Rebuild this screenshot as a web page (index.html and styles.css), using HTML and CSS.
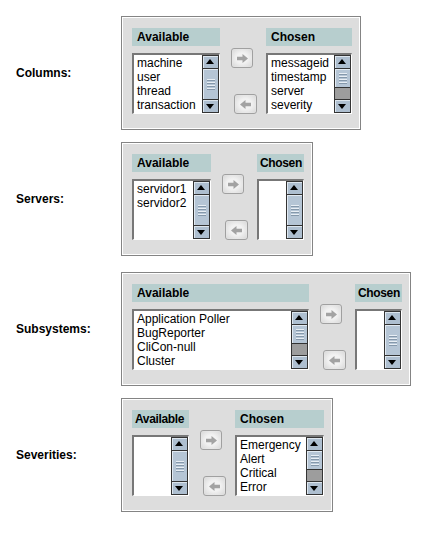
FILE: index.html
```html
<!DOCTYPE html>
<html>
<head>
<meta charset="utf-8">
<link rel="stylesheet" href="styles.css">
</head>
<body>
<div class="page">
  <div class="row">
    <div class="label">Columns:</div>
    <div class="panel">
      <div class="col w88">
        <div class="head">Available</div>
        <div class="list">
          <div class="items"><div>machine</div><div>user</div><div>thread</div><div>transaction</div></div>
          <div class="sbar"><div class="sbtn up"></div><div class="thumb full"><i></i></div><div class="sbtn down"></div></div>
        </div>
      </div>
      <div class="moves">
        <div class="mbtn add"><svg viewBox="0 0 10 8" width="11" height="9"><path d="M0 2.5h5V0l5 4-5 4V5.5H0z"/></svg></div>
        <div class="mbtn remove"><svg viewBox="0 0 10 8" width="11" height="9"><path d="M10 2.5H5V0L0 4l5 4V5.5h5z"/></svg></div>
      </div>
      <div class="col w86">
        <div class="head">Chosen</div>
        <div class="list">
          <div class="items"><div>messageid</div><div>timestamp</div><div>server</div><div>severity</div></div>
          <div class="sbar"><div class="sbtn up"></div><div class="thumb part"><i></i></div><div class="track"></div><div class="sbtn down"></div></div>
        </div>
      </div>
    </div>
  </div>

  <div class="row">
    <div class="label">Servers:</div>
    <div class="panel">
      <div class="col w79">
        <div class="head">Available</div>
        <div class="list">
          <div class="items"><div>servidor1</div><div>servidor2</div></div>
          <div class="sbar"><div class="sbtn up"></div><div class="thumb full"><i></i></div><div class="sbtn down"></div></div>
        </div>
      </div>
      <div class="moves">
        <div class="mbtn add"><svg viewBox="0 0 10 8" width="11" height="9"><path d="M0 2.5h5V0l5 4-5 4V5.5H0z"/></svg></div>
        <div class="mbtn remove"><svg viewBox="0 0 10 8" width="11" height="9"><path d="M10 2.5H5V0L0 4l5 4V5.5h5z"/></svg></div>
      </div>
      <div class="col w47">
        <div class="head tight">Chosen</div>
        <div class="list">
          <div class="items"></div>
          <div class="sbar"><div class="sbtn up"></div><div class="thumb full"><i></i></div><div class="sbtn down"></div></div>
        </div>
      </div>
    </div>
  </div>

  <div class="row wide-gap">
    <div class="label">Subsystems:</div>
    <div class="panel">
      <div class="col w177">
        <div class="head">Available</div>
        <div class="list">
          <div class="items"><div>Application Poller</div><div>BugReporter</div><div>CliCon-null</div><div>Cluster</div></div>
          <div class="sbar"><div class="sbtn up"></div><div class="thumb part"><i></i></div><div class="track"></div><div class="sbtn down"></div></div>
        </div>
      </div>
      <div class="moves">
        <div class="mbtn add"><svg viewBox="0 0 10 8" width="11" height="9"><path d="M0 2.5h5V0l5 4-5 4V5.5H0z"/></svg></div>
        <div class="mbtn remove"><svg viewBox="0 0 10 8" width="11" height="9"><path d="M10 2.5H5V0L0 4l5 4V5.5h5z"/></svg></div>
      </div>
      <div class="col w47">
        <div class="head tight">Chosen</div>
        <div class="list">
          <div class="items"></div>
          <div class="sbar"><div class="sbtn up"></div><div class="thumb full"><i></i></div><div class="sbtn down"></div></div>
        </div>
      </div>
    </div>
  </div>

  <div class="row">
    <div class="label">Severities:</div>
    <div class="panel">
      <div class="col w57">
        <div class="head tight">Available</div>
        <div class="list">
          <div class="items"></div>
          <div class="sbar"><div class="sbtn up"></div><div class="thumb full"><i></i></div><div class="sbtn down"></div></div>
        </div>
      </div>
      <div class="moves">
        <div class="mbtn add"><svg viewBox="0 0 10 8" width="11" height="9"><path d="M0 2.5h5V0l5 4-5 4V5.5H0z"/></svg></div>
        <div class="mbtn remove"><svg viewBox="0 0 10 8" width="11" height="9"><path d="M10 2.5H5V0L0 4l5 4V5.5h5z"/></svg></div>
      </div>
      <div class="col w89">
        <div class="head">Chosen</div>
        <div class="list">
          <div class="items"><div>Emergency</div><div>Alert</div><div>Critical</div><div>Error</div></div>
          <div class="sbar"><div class="sbtn up"></div><div class="thumb part"><i></i></div><div class="track"></div><div class="sbtn down"></div></div>
        </div>
      </div>
    </div>
  </div>
</div>
</body>
</html>
```
FILE: styles.css
```css
html, body {
  margin: 0;
  padding: 0;
  background: #ffffff;
  font-family: "Liberation Sans", Arial, sans-serif;
  color: #000;
}

.page {
  display: flex;
  flex-direction: column;
  padding: 16px 0 0 16px;
}

.row {
  display: flex;
  align-items: center;
}

.row + .row {
  margin-top: 12px;
}

.row.wide-gap {
  margin-top: 16px;
}

.label {
  width: 105px;
  font-size: 12px;
  font-weight: bold;
}

.panel {
  display: flex;
  background: #dddddd;
  border: 1px solid #848484;
  box-shadow: inset 0 0 0 1px #ffffff;
  padding: 11px 8px 15px 10px;
}

.col {
  display: flex;
  flex-direction: column;
}

.w88 { width: 88px; }
.w86 { width: 86px; }
.w79 { width: 79px; }
.w47 { width: 47px; }
.w177 { width: 177px; }
.w57 { width: 57px; }
.w89 { width: 89px; }

.head {
  height: 18px;
  line-height: 18px;
  background: #b7cece;
  font-size: 12px;
  font-weight: bold;
  padding-left: 5px;
  white-space: nowrap;
}

.head.tight {
  padding-left: 3px;
  letter-spacing: -0.35px;
}

.list {
  margin-top: 7px;
  height: 61px;
  box-sizing: border-box;
  display: flex;
  background: #ffffff;
  border-top: 2px solid #777777;
  border-left: 2px solid #777777;
  border-right: 1px solid #ffffff;
  border-bottom: 1px solid #ffffff;
}

.items {
  flex: 1;
  min-width: 0;
  padding: 1px 0 0 3px;
  font-size: 12px;
  line-height: 14px;
  white-space: nowrap;
  overflow: hidden;
}

.sbar {
  width: 17px;
  display: flex;
  flex-direction: column;
  background: #9d9d9d;
}

.sbtn {
  height: 14px;
  box-sizing: border-box;
  border: 1px solid #333333;
  background: #aebfd0;
  box-shadow: inset 1px 1px 0 #dde6ee;
  position: relative;
}

.sbtn::after {
  content: "";
  position: absolute;
  left: 3px;
  width: 0;
  height: 0;
  border-left: 4.5px solid transparent;
  border-right: 4.5px solid transparent;
}

.sbtn.up::after {
  top: 3px;
  border-bottom: 5px solid #000;
}

.sbtn.down::after {
  top: 4px;
  border-top: 5px solid #000;
}

.thumb {
  box-sizing: border-box;
  border: 1px solid #333333;
  border-top: 0;
  background: #b5c5d5;
  box-shadow: inset 1px 0 0 #e2eaf2, inset 0 1px 0 #e2eaf2;
  display: flex;
  align-items: center;
  justify-content: center;
}

.thumb.full {
  flex: 1;
  border-bottom: 0;
}

.thumb.part {
  height: 19px;
}

.thumb i {
  display: block;
  width: 8px;
  height: 11px;
  background: repeating-linear-gradient(#e8eef4 0 1px, #8598ab 1px 2px, transparent 2px 3px);
}

.track {
  flex: 1;
  background: #9d9d9d;
  border-left: 1px solid #333333;
  border-right: 1px solid #333333;
}

.moves {
  width: 26px;
  margin: 0 9px 0 11px;
  display: flex;
  flex-direction: column;
  justify-content: space-between;
  padding-top: 20px;
}

.mbtn {
  width: 22px;
  height: 20px;
  box-sizing: border-box;
  border: 1px solid #a0a0a0;
  border-radius: 3px;
  background: radial-gradient(ellipse at center, #f2f2f2 40%, #d6d6d6 100%);
  box-shadow: inset 0 0 1px #ffffff;
  display: flex;
  align-items: center;
  justify-content: center;
}

.mbtn svg {
  fill: #a3a3a3;
}

.mbtn.remove {
  align-self: flex-end;
  width: 23px;
}
```
